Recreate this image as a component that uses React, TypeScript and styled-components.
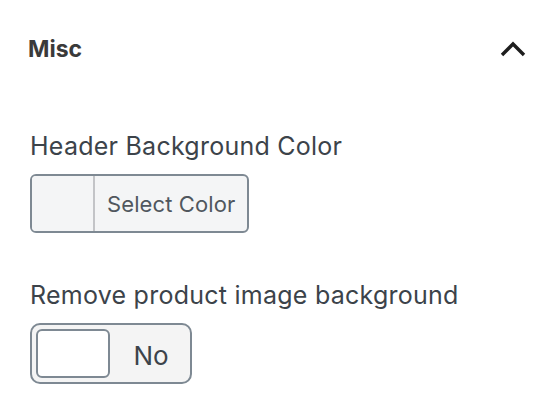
import React from 'react'
import styled, { createGlobalStyle } from 'styled-components'

const GlobalStyle = createGlobalStyle`
  body {
    margin: 0;
    background: #fff;
    font-family: Inter, "Noto Sans", sans-serif;
  }
`

const Panel = styled.div`
  width: 558px;
  height: 414px;
  padding: 0 30px 0 30px;
  box-sizing: border-box;
  background: #fff;
`

const PanelHeader = styled.div`
  height: 96px;
  display: flex;
  align-items: center;
  justify-content: space-between;
  padding-right: 2px;
  padding-top: 1px;
  box-sizing: border-box;
`

const Title = styled.h2`
  margin: 0;
  margin-left: -2px;
  font-size: 23px;
  font-weight: 700;
  color: #3a3a3a;
`

const Field = styled.div`
  display: flex;
  flex-direction: column;
  align-items: flex-start;
  margin-bottom: 46px;
`

const Label = styled.label<{ $top: number }>`
  font-size: 25px;
  letter-spacing: 0.25px;
  line-height: 32px;
  color: #3c434a;
  margin-top: ${(p) => p.$top}px;
  margin-bottom: 12px;
`

const ColorButton = styled.button`
  display: flex;
  align-items: stretch;
  height: 59px;
  padding: 0;
  border: 2px solid #7e8993;
  border-radius: 6px;
  background: #f4f5f6;
  overflow: hidden;
  font-family: inherit;
  cursor: pointer;
`

const Swatch = styled.span`
  width: 61px;
  border-right: 2px solid #c3c4c7;
  background: #f4f5f6;
`

const ButtonText = styled.span`
  display: flex;
  align-items: center;
  padding: 0 12px 0 12px;
  font-size: 22px;
  letter-spacing: 0.1px;
  color: #50575e;
`

const Toggle = styled.button`
  display: flex;
  align-items: center;
  width: 162px;
  height: 61px;
  padding: 0 0 0 4px;
  border: 2px solid #7e8993;
  border-radius: 10px;
  background: #f4f4f4;
  font-family: inherit;
  cursor: pointer;
`

const Knob = styled.span`
  width: 74px;
  height: 49px;
  box-sizing: border-box;
  border: 2px solid #7e8993;
  border-radius: 6px;
  background: #fff;
`

const ToggleText = styled.span`
  flex: 1;
  text-align: center;
  font-size: 26px;
  color: #3c434a;
  padding-left: 2px;
  padding-top: 4px;
`

const Chevron = () => (
  <svg width="26" height="16" viewBox="0 0 26 16">
    <path d="M2 14 L13 3 L24 14" fill="none" stroke="#1e1e1e" strokeWidth="3.4" />
  </svg>
)

export default function App() {
  return (
    <>
      <GlobalStyle />
      <Panel>
        <PanelHeader>
          <Title>Misc</Title>
          <Chevron />
        </PanelHeader>
        <Field>
          <Label $top={34}>Header Background Color</Label>
          <ColorButton>
            <Swatch />
            <ButtonText>Select Color</ButtonText>
          </ColorButton>
        </Field>
        <Field>
          <Label $top={0}>Remove product image background</Label>
          <Toggle>
            <Knob />
            <ToggleText>No</ToggleText>
          </Toggle>
        </Field>
      </Panel>
    </>
  )
}
